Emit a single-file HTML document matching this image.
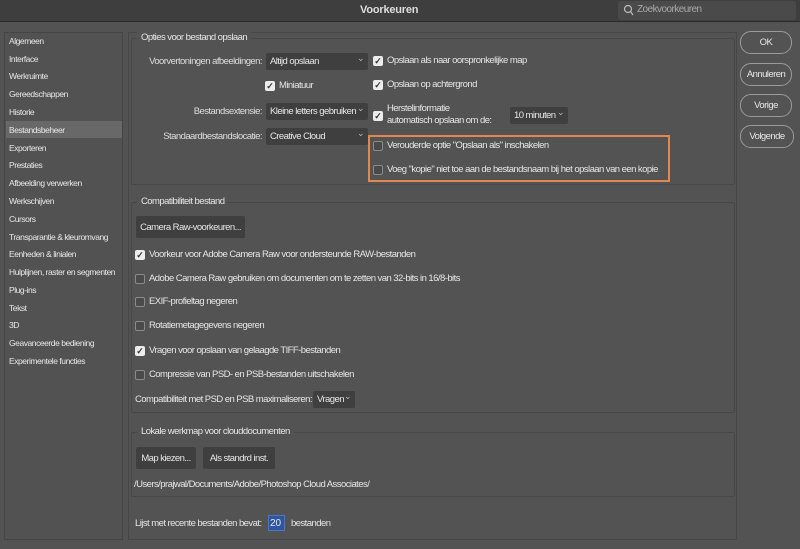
<!DOCTYPE html><html><head><style>
*{box-sizing:border-box;margin:0;padding:0}
body{width:800px;height:549px;background:#535353;font-family:"Liberation Sans",sans-serif;color:#e6e6e6;position:relative;overflow:hidden;font-size:9.5px;letter-spacing:-0.55px}
.a{position:absolute;white-space:nowrap}
.title{left:0;top:0;width:800px;height:22px;background:#3e3e3e;border-bottom:1px solid #2a2a2a}
.side{left:4px;top:32px;width:119px;height:508px;border:1px solid #454545;background:#525252}
.si{left:9px;font-size:8.5px;color:#e8e8e8;letter-spacing:-0.45px}
.grp{border:1px solid #474747;border-radius:2px}
.lbl{background:#535353;padding:0 4px}
.sel{background:#3f3f3f;height:17px;padding:3px 4px;border-radius:2px;overflow:hidden}
.sel:after{content:"⌄";position:absolute;right:4px;top:0px;font-size:9px;color:#bbb}
.cb{width:10px;height:10px;border-radius:2px;background:#ececec;color:#333;font-size:9px;line-height:10px;text-align:center;font-weight:bold;letter-spacing:0}
.cbo{width:10px;height:10px;border-radius:2px;border:1px solid #8a8a8a;background:#4a4a4a}
.btn{background:#3f3f3f;border-radius:2px;height:22px;padding:6px 0;text-align:center}
.rb{left:740px;width:52px;height:23px;border:1px solid #9a9a9a;border-radius:11px;text-align:center;line-height:21px}
.r{text-align:right;color:#ddd}
</style></head><body>
<div class="a title"></div>
<div class="a" style="left:360px;top:4px;font-size:11px;font-weight:bold;color:#ddd;letter-spacing:-0.2px">Voorkeuren</div>
<div class="a" style="left:618px;top:1px;width:178px;height:19px;background:#4a4a4a;border-radius:3px"></div>
<svg class="a" style="left:623px;top:4px" width="11" height="12"><circle cx="5" cy="5" r="3.5" fill="none" stroke="#bbb" stroke-width="1.2"/><path d="M7.5 7.5L10 11" stroke="#bbb" stroke-width="1.2"/></svg>
<div class="a" style="left:637px;top:4px;color:#aaa;font-size:10px">Zoekvoorkeuren</div>

<div class="a side"></div>
<div class="a" style="left:6px;top:121px;width:116px;height:17px;background:#686868"></div>
<div class="a si" style="top:36px">Algemeen</div>
<div class="a si" style="top:54px">Interface</div>
<div class="a si" style="top:71px">Werkruimte</div>
<div class="a si" style="top:89px">Gereedschappen</div>
<div class="a si" style="top:107px">Historie</div>
<div class="a si" style="top:125px">Bestandsbeheer</div>
<div class="a si" style="top:143px">Exporteren</div>
<div class="a si" style="top:160px">Prestaties</div>
<div class="a si" style="top:178px">Afbeelding verwerken</div>
<div class="a si" style="top:196px">Werkschijven</div>
<div class="a si" style="top:214px">Cursors</div>
<div class="a si" style="top:232px">Transparantie &amp; kleuromvang</div>
<div class="a si" style="top:249px">Eenheden &amp; linialen</div>
<div class="a si" style="top:267px">Hulplijnen, raster en segmenten</div>
<div class="a si" style="top:285px">Plug-ins</div>
<div class="a si" style="top:303px">Tekst</div>
<div class="a si" style="top:320px">3D</div>
<div class="a si" style="top:338px">Geavanceerde bediening</div>
<div class="a si" style="top:356px">Experimentele functies</div>

<div class="a" style="left:128px;top:32px;width:609px;height:508px;border:1px solid #474747"></div>

<div class="a grp" style="left:131px;top:38px;width:604px;height:147px"></div>
<div class="a lbl" style="left:137px;top:32px">Opties voor bestand opslaan</div>
<div class="a r" style="left:100px;width:162px;top:56px">Voorvertoningen afbeeldingen:</div>
<div class="a sel" style="left:266px;top:53px;width:102px">Altijd opslaan</div>
<div class="a cb" style="left:265px;top:81px">✓</div><div class="a" style="left:279px;top:80px">Miniatuur</div>
<div class="a r" style="left:100px;width:162px;top:106px">Bestandsextensie:</div>
<div class="a sel" style="left:266px;top:103px;width:102px;padding-right:14px">Kleine letters gebruiken</div>
<div class="a r" style="left:100px;width:162px;top:131px">Standaardbestandslocatie:</div>
<div class="a sel" style="left:266px;top:128px;width:102px">Creative Cloud</div>

<div class="a cb" style="left:373px;top:56px">✓</div><div class="a" style="left:387px;top:55px">Opslaan als naar oorspronkelijke map</div>
<div class="a cb" style="left:373px;top:80px">✓</div><div class="a" style="left:387px;top:79px">Opslaan op achtergrond</div>
<div class="a cb" style="left:373px;top:111px">✓</div><div class="a" style="left:387px;top:103px;line-height:12px">Herstelinformatie<br>automatisch opslaan om de:</div>
<div class="a sel" style="left:510px;top:107px;width:58px">10 minuten</div>
<div class="a" style="left:368px;top:135px;width:302px;height:47px;border:2px solid #e08850"></div>
<div class="a cbo" style="left:373px;top:141px"></div><div class="a" style="left:387px;top:140px">Verouderde optie "Opslaan als" inschakelen</div>
<div class="a cbo" style="left:373px;top:165px"></div><div class="a" style="left:387px;top:164px">Voeg "kopie" niet toe aan de bestandsnaam bij het opslaan van een kopie</div>

<div class="a grp" style="left:131px;top:202px;width:604px;height:211px"></div>
<div class="a lbl" style="left:137px;top:196px">Compatibiliteit bestand</div>
<div class="a btn" style="left:136px;top:216px;width:109px">Camera Raw-voorkeuren...</div>
<div class="a cb" style="left:135px;top:250px">✓</div><div class="a" style="left:149px;top:249px">Voorkeur voor Adobe Camera Raw voor ondersteunde RAW-bestanden</div>
<div class="a cbo" style="left:135px;top:274px"></div><div class="a" style="left:149px;top:273px">Adobe Camera Raw gebruiken om documenten om te zetten van 32-bits in 16/8-bits</div>
<div class="a cbo" style="left:135px;top:297px"></div><div class="a" style="left:149px;top:296px">EXIF-profieltag negeren</div>
<div class="a cbo" style="left:135px;top:321px"></div><div class="a" style="left:149px;top:320px">Rotatiemetagegevens negeren</div>
<div class="a cb" style="left:135px;top:346px">✓</div><div class="a" style="left:149px;top:345px">Vragen voor opslaan van gelaagde TIFF-bestanden</div>
<div class="a cbo" style="left:135px;top:370px"></div><div class="a" style="left:149px;top:369px">Compressie van PSD- en PSB-bestanden uitschakelen</div>
<div class="a" style="left:135px;top:394px">Compatibiliteit met PSD en PSB maximaliseren:</div>
<div class="a sel" style="left:313px;top:391px;width:42px">Vragen</div>

<div class="a grp" style="left:131px;top:432px;width:604px;height:65px"></div>
<div class="a lbl" style="left:137px;top:426px">Lokale werkmap voor clouddocumenten</div>
<div class="a btn" style="left:136px;top:447px;width:60px">Map kiezen...</div>
<div class="a btn" style="left:203px;top:447px;width:72px">Als standrd inst.</div>
<div class="a" style="left:134px;top:479px">/Users/prajwal/Documents/Adobe/Photoshop Cloud Associates/</div>
<div class="a" style="left:135px;top:518px">Lijst met recente bestanden bevat:</div>
<div class="a" style="left:268px;top:515px;width:17px;height:16px;background:#2f55a0;border:1px solid #4a78c8;padding:2px 1px;font-size:10px;letter-spacing:0">20</div>
<div class="a" style="left:291px;top:518px">bestanden</div>

<div class="a rb" style="left:740px;top:31px">OK</div>
<div class="a rb" style="left:740px;top:63px">Annuleren</div>
<div class="a rb" style="left:740px;top:94px">Vorige</div>
<div class="a rb" style="left:740px;top:125px;width:54px">Volgende</div>
</body></html>
